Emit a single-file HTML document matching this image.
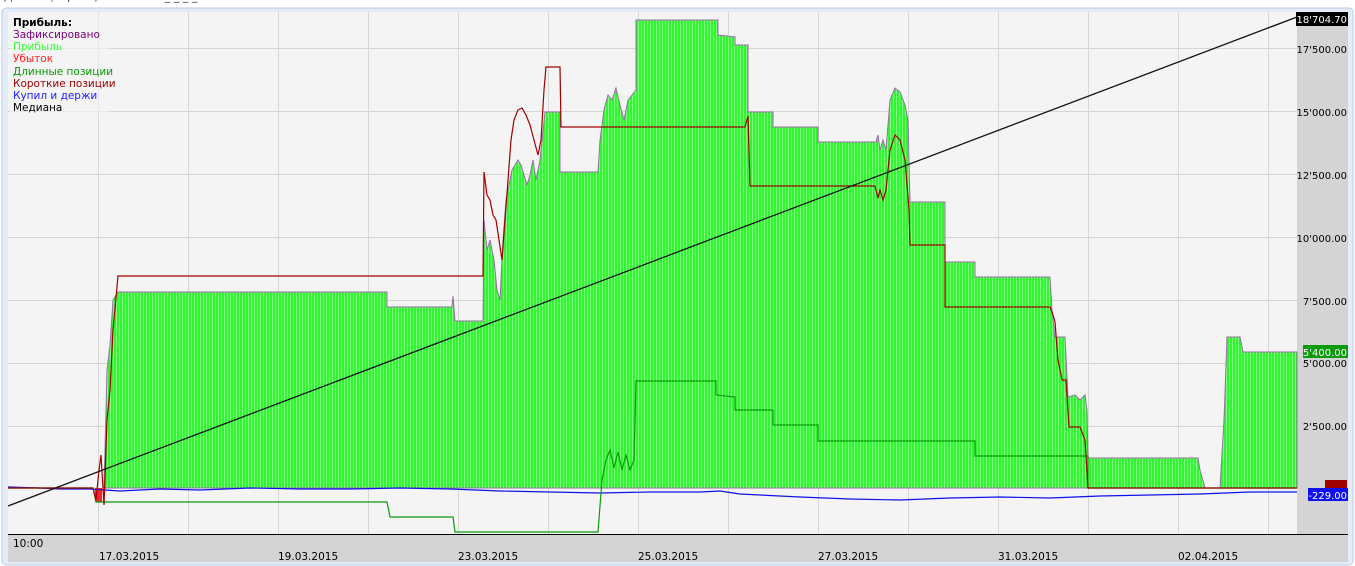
<!DOCTYPE html>
<html><head><meta charset="utf-8"><style>
html,body{margin:0;padding:0;width:1355px;height:566px;overflow:hidden;background:#fff;font-family:"DejaVu Sans","Liberation Sans",sans-serif;}
</style></head><body>
<svg width="1355" height="566" xmlns="http://www.w3.org/2000/svg" style="position:absolute;left:0;top:0" font-family="DejaVu Sans, Liberation Sans, sans-serif">
<defs>
<pattern id="st" width="3" height="10" patternUnits="userSpaceOnUse">
<rect width="3" height="10" fill="#30f530"/><rect x="2" width="1" height="10" fill="#80fc80"/>
</pattern>
</defs>
<rect x="0" y="0" width="1355" height="566" fill="#fff"/>
<text x="4" y="0" font-size="11" fill="#444">Деталь (короче) . . . . . . . . . _ _ _ _ . . . . . . . . . . . . . . . . . .</text>
<rect x="2" y="8" width="1351" height="557" rx="4" fill="#e3ecf7" stroke="#b8cce4"/>
<rect x="8" y="12" width="1340" height="550" fill="#d4d4d4"/>
<rect x="8" y="12" width="1289" height="522" fill="#f4f4f4"/>
<g stroke="#d6d6d6" stroke-width="1">
<line x1="98.5" y1="12" x2="98.5" y2="534"/><line x1="188.5" y1="12" x2="188.5" y2="534"/><line x1="278.5" y1="12" x2="278.5" y2="534"/><line x1="368.5" y1="12" x2="368.5" y2="534"/><line x1="458.5" y1="12" x2="458.5" y2="534"/><line x1="548.5" y1="12" x2="548.5" y2="534"/><line x1="638.5" y1="12" x2="638.5" y2="534"/><line x1="728.5" y1="12" x2="728.5" y2="534"/><line x1="818.5" y1="12" x2="818.5" y2="534"/><line x1="908.5" y1="12" x2="908.5" y2="534"/><line x1="998.5" y1="12" x2="998.5" y2="534"/><line x1="1088.5" y1="12" x2="1088.5" y2="534"/><line x1="1178.5" y1="12" x2="1178.5" y2="534"/><line x1="1268.5" y1="12" x2="1268.5" y2="534"/>
<line x1="8" y1="48.5" x2="1297" y2="48.5"/><line x1="8" y1="111.5" x2="1297" y2="111.5"/><line x1="8" y1="174.5" x2="1297" y2="174.5"/><line x1="8" y1="237.5" x2="1297" y2="237.5"/><line x1="8" y1="300.5" x2="1297" y2="300.5"/><line x1="8" y1="363.5" x2="1297" y2="363.5"/><line x1="8" y1="426.5" x2="1297" y2="426.5"/>
</g>
<polygon fill="url(#st)" stroke="#9a6fa8" stroke-width="1" points="104,488 107,370 110,345 113,300 118,292 387,292 387,307 452,307 453,296 455,321 483,321 484,220 487,250 490,240 494,260 497,290 500,300 503,240 506,200 509,185 512,170 515,165 518,160 521,165 524,175 527,185 530,175 533,160 536,180 540,160 545,112 560,112 560,172 598,172 600,140 604,110 608,95 612,100 616,88 620,105 624,120 628,100 632,95 636,90 636,20 718,20 718,35 735,37 735,45 748,45 748,112 773,112 773,127 818,127 818,142 876,142 878,135 880,150 883,140 886,150 890,100 895,88 900,92 905,105 908,120 910,202 945,202 945,262 975,262 975,277 1050,277 1052,310 1055,337 1065,337 1068,397 1075,395 1080,400 1085,395 1087,410 1088,458 1198,458 1200,470 1205,488 1220,488 1224,420 1227,337 1240,337 1243,352 1297,352 1297,488"/>
<rect x="95" y="488" width="7" height="14" fill="#ff2020"/>
<polyline fill="none" stroke="#1010ee" stroke-width="1.2" points="8,487 40,488 60,489 90,489 120,491 160,489 200,490 250,488 300,489 350,489 400,488 450,489 500,491 550,492 600,493 650,492 700,492 720,491 740,494 760,495 800,497 850,499 900,500 950,498 1000,497 1050,498 1100,496 1150,495 1200,494 1250,492 1297,492"/>
<polyline fill="none" stroke="#0a9a0a" stroke-width="1.2" points="8,488 93,488 96,502 387,502 390,517 453,517 455,532 598,532 602,480 606,460 610,450 614,468 618,452 622,470 626,455 630,470 634,460 636,381 716,381 716,395 735,397 735,410 773,410 773,425 818,425 818,441 975,441 975,456 1088,456 1088,488 1297,488"/>
<polyline fill="none" stroke="#a00000" stroke-width="1.2" points="8,488 93,488 96,500 99,470 101,455 104,505 107,420 110,390 113,330 118,276 483,276 484,172 487,195 490,200 493,215 496,220 499,240 502,260 505,220 508,180 511,140 514,120 518,110 522,108 526,115 530,125 534,140 538,155 541,140 544,90 546,67 560,67 561,127 745,127 748,116 750,186 875,186 878,198 880,190 883,200 886,190 890,150 895,135 900,140 905,160 909,210 910,245 945,245 945,307 1050,307 1053,315 1055,322 1058,360 1062,380 1066,380 1069,427 1080,427 1085,440 1088,488 1297,488"/>
<line x1="8" y1="506" x2="1297" y2="17" stroke="#111" stroke-width="1.3"/>
<line x1="8" y1="534.5" x2="1348" y2="534.5" stroke="#000"/>
<rect x="10" y="14" width="100" height="100" fill="#f4f4f4" opacity="0.6"/>
<g font-size="10.5">
<text x="13" y="26" font-weight="bold" fill="#000">Прибыль:</text>
<text x="13" y="38" fill="#800080">Зафиксировано</text>
<text x="13" y="50" fill="#33ff33">Прибыль</text>
<text x="13" y="62" fill="#ff2020">Убыток</text>
<text x="13" y="75" fill="#0a9a0a">Длинные позиции</text>
<text x="13" y="87" fill="#a00000">Короткие позиции</text>
<text x="13" y="99" fill="#2020ff">Купил и держи</text>
<text x="13" y="111" fill="#000">Медиана</text>
</g>
<g font-size="10" fill="#000" text-anchor="end">
<rect x="1296" y="12" width="52" height="14" fill="#000"/>
<text x="1347" y="23" fill="#fff">18'704.70</text>
<text x="1347" y="53">17'500.00</text>
<text x="1347" y="116">15'000.00</text>
<text x="1347" y="179">12'500.00</text>
<text x="1347" y="242">10'000.00</text>
<text x="1347" y="305">7'500.00</text>
<rect x="1303" y="345" width="45" height="13" fill="#0a9a0a"/>
<text x="1347" y="356" fill="#fff">5'400.00</text>
<text x="1347" y="367">5'000.00</text>
<text x="1347" y="430">2'500.00</text>
<rect x="1325" y="480" width="22" height="8" fill="#a00000"/>
<rect x="1308" y="488" width="40" height="13" fill="#1010ee"/>
<text x="1347" y="499" fill="#fff">-229.00</text>
</g>
<g font-size="10.5" fill="#000">
<text x="13" y="547">10:00</text>
<text x="99" y="560">17.03.2015</text>
<text x="278" y="560">19.03.2015</text>
<text x="458" y="560">23.03.2015</text>
<text x="638" y="560">25.03.2015</text>
<text x="818" y="560">27.03.2015</text>
<text x="998" y="560">31.03.2015</text>
<text x="1178" y="560">02.04.2015</text>
</g>
</svg>
</body></html>
